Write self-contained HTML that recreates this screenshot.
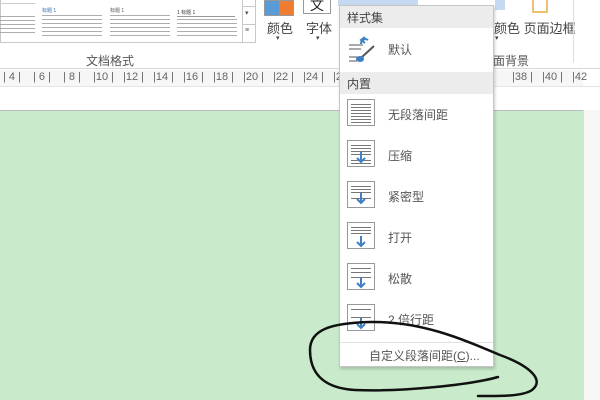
<!DOCTYPE html>
<html><head><meta charset="utf-8"><style>
*{margin:0;padding:0;box-sizing:border-box}
body{width:600px;height:400px;overflow:hidden;background:#fff;font-family:"Liberation Sans","Noto Sans CJK SC",sans-serif;position:relative;color:#444}
.a{position:absolute}
.t{font-size:12px;color:#444;white-space:nowrap}
.tx{position:absolute;background:repeating-linear-gradient(#9a9a9a 0 1px,transparent 1px 4px);opacity:.8}
.menu{position:absolute;left:339px;top:5px;width:155px;height:362px;background:#fff;border:1px solid #c6c6c6;box-shadow:1px 2px 3px rgba(0,0,0,.2)}
.hd{position:absolute;left:0;width:153px;height:22px;background:#ececec;font-size:12px;color:#444;padding:3px 0 0 7px}
.it{position:absolute;left:0;width:153px;height:41px}
.ic{position:absolute;left:7px;top:5px;width:28px;height:27px;border:1px solid #999;background:#fff}
.ic i{position:absolute;left:3px;right:3px;height:1px;background:#777}
.lb{position:absolute;left:48px;top:12px;font-size:12px;color:#555}
.r{position:absolute;top:1px;font-size:11px;color:#666;white-space:nowrap}
</style></head><body>
<!-- ribbon -->
<div class="a" style="left:0;top:0;width:256px;height:43px;border:1px solid #c8c8c8;border-top:none;background:#fff"></div>
<div class="a" style="left:0;top:3px;width:35px;height:1px;background:#ccc"></div>
<div class="tx" style="left:0;top:16px;width:35px;height:20px"></div>
<div class="a" style="left:42px;top:7px;font-size:5px;color:#2e6db5">标题 1</div>
<div class="tx" style="left:42px;top:15px;width:60px;height:21px"></div>
<div class="a" style="left:110px;top:7px;font-size:5px;color:#555">标题 1</div>
<div class="tx" style="left:110px;top:15px;width:60px;height:21px"></div>
<div class="a" style="left:177px;top:9px;font-size:5px;color:#333">1 标题 1</div>
<div class="a" style="left:177px;top:16px;width:58px;height:1px;background:#999"></div>
<div class="tx" style="left:177px;top:19px;width:60px;height:17px"></div>
<div class="a" style="left:242px;top:0;width:14px;height:43px;border-left:1px solid #c8c8c8"></div>
<div class="a" style="left:242px;top:6px;width:14px;height:1px;background:#c8c8c8"></div>
<div class="a" style="left:242px;top:24px;width:14px;height:1px;background:#c8c8c8"></div>
<div class="a t" style="left:245px;top:9px;font-size:7px;color:#555">▾</div>
<div class="a t" style="left:245px;top:27px;font-size:7px;color:#555">≡</div>
<div class="a t" style="left:86px;top:52px;font-size:12px;color:#555">文档格式</div>
<!-- color btn -->
<div class="a" style="left:264px;top:0;width:30px;height:16px;border:1px solid #999"><div class="a" style="left:0;top:0;width:14px;height:14px;background:#5b9bd5"></div><div class="a" style="left:14px;top:0;width:14px;height:14px;background:#ed7d31"></div></div>
<div class="a t" style="left:267px;top:18px;font-size:13px">颜色</div>
<div class="a t" style="left:276px;top:34px;font-size:7px">▾</div>
<div class="a" style="left:303px;top:0;width:28px;height:14px;border:1px solid #999;border-top:none;font-size:14px;line-height:10px;text-align:center;color:#222">文</div>
<div class="a t" style="left:306px;top:18px;font-size:13px">字体</div>
<div class="a t" style="left:316px;top:34px;font-size:7px">▾</div>
<div class="a" style="left:338px;top:0;width:80px;height:6px;background:#c5d9f1"></div>
<div class="a" style="left:495px;top:0;width:10px;height:10px;background:#c5d9f1"></div>
<div class="a t" style="left:494px;top:18px;font-size:13px">颜色 页面边框</div>
<div class="a t" style="left:493px;top:52px;font-size:12px;color:#555">面背景</div>
<div class="a" style="left:532px;top:0;width:16px;height:13px;border:2px solid #f0c070;border-top:none"></div>
<div class="a t" style="left:495px;top:34px;font-size:7px">▾</div>
<div class="a" style="left:573px;top:0;width:1px;height:63px;background:#ddd"></div>
<div class="a" style="left:0;top:68px;width:600px;height:1px;background:#d8d8d8"></div>
<!-- ruler -->
<div class="a" style="left:0;top:70px;width:583px;height:16px;background:#f6f6f6">
<span class="r" style="left:3px">| 4 |</span><span class="r" style="left:33px">| 6 |</span><span class="r" style="left:63px">| 8 |</span><span class="r" style="left:93px">|10 |</span><span class="r" style="left:123px">|12 |</span><span class="r" style="left:153px">|14 |</span><span class="r" style="left:183px">|16 |</span><span class="r" style="left:213px">|18 |</span><span class="r" style="left:243px">|20 |</span><span class="r" style="left:273px">|22 |</span><span class="r" style="left:303px">|24 |</span><span class="r" style="left:333px">|26</span><span class="r" style="left:512px">|38 |</span><span class="r" style="left:542px">|40 |</span><span class="r" style="left:572px">|42</span></div>
<div class="a" style="left:0;top:86px;width:600px;height:1px;background:#e4e4e4"></div>
<div class="a" style="left:0;top:110px;width:583px;height:290px;background:#c9ebcc;border-top:1px solid #bbb"></div>
<div class="a" style="left:583px;top:110px;width:17px;height:290px;background:#f7f7f7;border-left:1px solid #ddd"></div>
<!-- menu -->
<div class="menu">
<div class="hd" style="top:0">样式集</div>
<div class="it" style="top:23px">
<svg class="a" style="left:7px;top:6px" width="30" height="28" viewBox="0 0 30 28"><path d="M2 10H16M2 14H14M2 22H12M2 26H10" stroke="#555" stroke-width="1" fill="none"/><path d="M14 9c0-4 4-6 7-4M18 2l-4 3 4 3" stroke="#3f7fc5" stroke-width="2" fill="none"/><path d="M27 11L15 22" stroke="#555" stroke-width="2"/><ellipse cx="13" cy="24" rx="4" ry="3" fill="#3f7fc5"/></svg>
<div class="lb">默认</div></div>
<div class="hd" style="top:66px">内置</div>
<div class="it" style="top:88px"><div class="ic"><i style="top:4px"></i><i style="top:7px"></i><i style="top:10px"></i><i style="top:13px"></i><i style="top:16px"></i><i style="top:19px"></i><i style="top:22px"></i></div><div class="lb">无段落间距</div></div>
<div class="it" style="top:129px"><div class="ic"><i style="top:4px"></i><i style="top:7px"></i><i style="top:10px"></i><i style="top:13px"></i><i style="top:19px"></i><i style="top:22px"></i><svg class="a" style="left:8px;top:11px" width="10" height="12"><path d="M5 0V10M1 6l4 4 4-4" stroke="#3f7fc5" stroke-width="2" fill="none"/></svg></div><div class="lb">压缩</div></div>
<div class="it" style="top:170px"><div class="ic"><i style="top:4px"></i><i style="top:7px"></i><i style="top:10px"></i><i style="top:16px"></i><svg class="a" style="left:8px;top:11px" width="10" height="12"><path d="M5 0V10M1 6l4 4 4-4" stroke="#3f7fc5" stroke-width="2" fill="none"/></svg></div><div class="lb">紧密型</div></div>
<div class="it" style="top:211px"><div class="ic"><i style="top:4px"></i><i style="top:7px"></i><i style="top:10px"></i><svg class="a" style="left:8px;top:13px" width="10" height="12"><path d="M5 0V10M1 6l4 4 4-4" stroke="#3f7fc5" stroke-width="2" fill="none"/></svg></div><div class="lb">打开</div></div>
<div class="it" style="top:252px"><div class="ic"><i style="top:4px"></i><i style="top:8px"></i><i style="top:13px"></i><svg class="a" style="left:8px;top:13px" width="10" height="12"><path d="M5 0V10M1 6l4 4 4-4" stroke="#3f7fc5" stroke-width="2" fill="none"/></svg></div><div class="lb">松散</div></div>
<div class="it" style="top:293px"><div class="ic"><i style="top:4px"></i><i style="top:12px"></i><svg class="a" style="left:8px;top:13px" width="10" height="12"><path d="M5 0V10M1 6l4 4 4-4" stroke="#3f7fc5" stroke-width="2" fill="none"/></svg></div><div class="lb">2 倍行距</div></div>
<div class="a" style="left:0;top:336px;width:153px;height:1px;background:#e2e2e2"></div>
<div class="a t" style="left:29px;top:341px;color:#555">自定义段落间距(<u>C</u>)...</div>
</div>
<svg class="a" style="left:0;top:0" width="600" height="400"><path d="M498 377 C470 385,400 392,355 390 C320 388,310 370,310 350 C310 330,330 323,370 322 C420 321,460 338,500 355 C530 366,545 380,532 390 C522 397,495 396,478 396" stroke="#111" stroke-width="2.5" fill="none" stroke-linecap="round"/></svg>
</body></html>
